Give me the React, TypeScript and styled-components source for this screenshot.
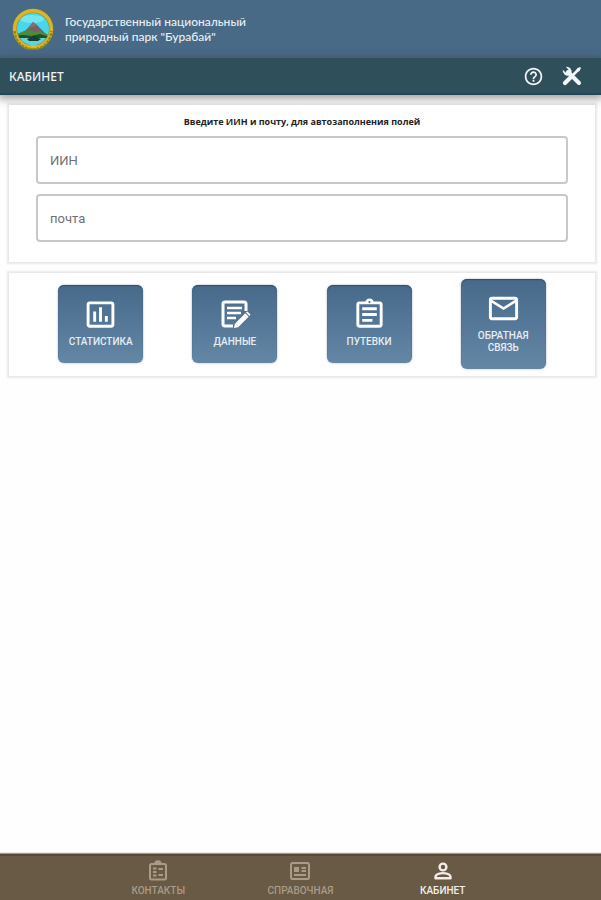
import React, { useState } from "react";
import styled, { createGlobalStyle } from "styled-components";
import {
  MdHelpOutline,
  MdInsertChartOutlined,
  MdMailOutline,
  MdOutlineAssignment,
} from "react-icons/md";

const GlobalStyle = createGlobalStyle`
  * { box-sizing: border-box; }
  body {
    margin: 0;
    background: #fefefe;
    font-family: Roboto, "Liberation Sans", sans-serif;
  }
  button { font: inherit; }
`;

const Page = styled.div`
  display: flex;
  flex-direction: column;
  min-height: 100vh;
`;

const Brand = styled.header`
  display: flex;
  align-items: center;
  gap: 11px;
  height: 58px;
  padding: 0 12px;
  background: #486a86;
  color: #e9f0f6;
`;

const BrandName = styled.h1`
  margin: 0;
  max-width: 200px;
  font: 500 12px/15px Lato, "Noto Sans", sans-serif;
`;

const TitleBar = styled.div`
  display: flex;
  align-items: center;
  justify-content: space-between;
  height: 37px;
  padding: 2px 19px 0 9px;
  background: #2f4f5b;
  border-bottom: 2px solid #214858;
  box-shadow: 0 2px 8px 2px rgba(60, 50, 50, 0.45);
  color: #eef3f5;
`;

const Title = styled.h2`
  margin: 0;
  font: 500 12px/16px "Noto Sans", "Open Sans", sans-serif;
`;

const Tools = styled.div`
  display: flex;
  gap: 18px;
`;

const IconButton = styled.button`
  display: flex;
  padding: 0;
  border: 0;
  background: none;
  color: #f3f6f8;
  cursor: pointer;
`;

const Main = styled.main`
  display: flex;
  flex: 1;
  flex-direction: column;
  gap: 11px;
  padding: 10px 6px 0 9px;
`;

const cardShadow = "0 0 2px 2px rgba(0, 0, 0, 0.09)";

const FormCard = styled.form`
  display: flex;
  flex-direction: column;
  gap: 10px;
  padding: 10px 27px 20px;
  background: #fff;
  box-shadow: ${cardShadow};
`;

const Hint = styled.p`
  margin: 0 0 -3px;
  text-align: center;
  font: 700 9px/14px "Open Sans", "Noto Sans", sans-serif;
  color: #222;
`;

const Field = styled.input`
  width: 100%;
  height: 48px;
  padding: 0 12px;
  border: 2px solid #c8c8c8;
  border-radius: 4px;
  background: #fff;
  color: #333;
  font: 400 13px/18px Roboto, sans-serif;
  &::placeholder { color: #707070; opacity: 1; }
  &:focus { outline: none; border-color: #486a86; }
`;

const ActionCard = styled.section`
  display: flex;
  align-items: center;
  justify-content: space-evenly;
  padding: 6px 0 7px;
  background: #fff;
  box-shadow: ${cardShadow};
`;

const Tile = styled.button`
  display: flex;
  flex-direction: column;
  align-items: center;
  gap: 4px;
  width: 85px;
  padding: 11px 4px 15px;
  border: 0;
  border-radius: 6px;
  background: linear-gradient(#47698a, #6487a6);
  box-shadow: inset 0 1px 1px #2d4e6b, 0 0 2px rgba(50, 80, 110, 0.5);
  color: #fff;
  cursor: pointer;
`;

const TileIcon = styled.span`
  display: flex;
  align-items: center;
  justify-content: center;
  height: 36px;
`;

const TileLabel = styled.span`
  font-size: 10px;
  line-height: 12px;
  font-weight: 500;
  color: #e6edf3;
`;

const BottomNav = styled.nav`
  display: grid;
  grid-template-columns: repeat(3, 1fr);
  height: 46px;
  padding: 0 14.5%;
  border-top: 2px solid #584a37;
  background: #695a45;
  box-shadow: 0 -1px 1px rgba(90, 85, 70, 0.6);
`;

const NavLink = styled.a<{ $active?: boolean }>`
  display: flex;
  flex-direction: column;
  align-items: center;
  gap: 2px;
  padding-top: 4px;
  color: ${(p) => (p.$active ? "#f3eee7" : "#a99b87")};
  font-size: 10px;
  line-height: 14px;
  font-weight: 500;
  text-decoration: none;
`;

function Emblem() {
  return (
    <svg width="42" height="42" viewBox="0 0 42 42" aria-hidden="true">
      <defs>
        <clipPath id="scene">
          <circle cx="21" cy="21" r="16" />
        </clipPath>
      </defs>
      <circle cx="21" cy="21" r="20.5" fill="#8d8e28" />
      <circle cx="21" cy="21" r="18.3" fill="none" stroke="#dcb42c" strokeWidth="3.4" />
      <path d="M2.7 23A18.3 18.3 0 0 0 39.3 23" fill="none" stroke="#8a8b22" strokeWidth="2.4" strokeDasharray="3 1" />
      <g clipPath="url(#scene)">
        <path fill="#45d8ec" d="M4 4h34v34H4z" />
        <ellipse cx="20" cy="11" rx="12" ry="4" fill="#72e5ef" />
        <path fill="#796064" d="M8 27 16 20l5-6 4 3 10 10z" />
        <path fill="#8f6a6e" d="m16 20 5-6 4 3-4 2z" />
        <path fill="#4d8a39" d="M4 27c6-4 9-4 14-5l5 2 5-1c4 2 7 3 10 5v4H4z" />
        <path fill="#244d2c" d="M5 28c8-2 10 0 15 0l8-2 10 3v3H5z" />
        <path fill="#62d4dc" d="M4 30h34v9H4z" />
        <path fill="#153e35" d="m15 31 5-2 2-2 2 2 5 2-3 2h-9z" />
      </g>
      <path d="M19 37h5v3h-5z" fill="#d5bd32" />
    </svg>
  );
}

function ToolsIcon() {
  return (
    <svg width="20" height="20" viewBox="0 0 20 20" fill="none" aria-hidden="true">
      <path d="m3 17 5-5" stroke="currentColor" strokeWidth="4.2" strokeLinecap="round" />
      <path d="m7 13 10-10" stroke="currentColor" strokeWidth="2.6" />
      <path d="m15 2.5 3-1.5 1 1-1.5 3-2 .7-1.2-1.2z" fill="currentColor" />
      <path d="m6 6 11 11" stroke="currentColor" strokeWidth="4" strokeLinecap="round" />
      <path d="M3.8.8a5 5 0 0 1 5.5 6.7L7.5 9.3A5 5 0 0 1 .8 3.8l2.8 2.7 2.5-.5.4-2.3z" fill="currentColor" />
    </svg>
  );
}

function FormEditIcon() {
  return (
    <svg width="32" height="32" viewBox="0 0 32 32" fill="none" stroke="currentColor" aria-hidden="true">
      <path d="M14 28H6a2 2 0 0 1-2-2V6a2 2 0 0 1 2-2h19a2 2 0 0 1 2 2v7" strokeWidth="3" />
      <path d="M8 10h15M8 15h14M8 20h9" strokeWidth="2.6" />
      <path d="m18 27 10-10" strokeWidth="4.6" />
      <path d="m16 25 4 4-5 1zM27 14.5l1.5-1 3 3-1 1.5z" fill="currentColor" stroke="none" />
    </svg>
  );
}

function ContactsIcon() {
  return (
    <svg width="22" height="22" viewBox="0 0 22 22" fill="none" stroke="currentColor" aria-hidden="true">
      <rect x="3" y="4" width="16" height="15.5" rx="1.5" strokeWidth="2" />
      <path d="M8 4a3 3 0 0 1 6 0" fill="currentColor" strokeWidth="1.4" />
      <path d="M6 8.5h3.5M6 12h3.5M6 15.5h3.5M11.5 9H16M11.5 15H16" strokeWidth="1.8" />
    </svg>
  );
}

function ReferenceIcon() {
  return (
    <svg width="22" height="22" viewBox="0 0 22 22" fill="none" stroke="currentColor" aria-hidden="true">
      <rect x="2" y="3" width="18" height="16" rx="1.8" strokeWidth="2" />
      <path d="M5 7h5v5H5z" fill="currentColor" stroke="none" />
      <path d="M12.5 8H17M12.5 11H17M5 15h12" strokeWidth="1.8" />
    </svg>
  );
}

function PersonIcon() {
  return (
    <svg width="22" height="22" viewBox="0 0 22 22" fill="none" stroke="currentColor" strokeWidth="2.4" aria-hidden="true">
      <circle cx="11" cy="7" r="3.4" />
      <path d="M3.5 18.2v-1.4c0-2.5 4.5-3.7 7.5-3.7s7.5 1.2 7.5 3.7v1.4z" strokeLinejoin="round" />
    </svg>
  );
}

const actions = [
  { label: "СТАТИСТИКА", icon: <MdInsertChartOutlined size={35} /> },
  { label: "ДАННЫЕ", icon: <FormEditIcon /> },
  { label: "ПУТЕВКИ", icon: <MdOutlineAssignment size={35} /> },
  { label: "ОБРАТНАЯ СВЯЗЬ", icon: <MdMailOutline size={35} /> },
];

export default function App() {
  const [iin, setIin] = useState("");
  const [mail, setMail] = useState("");

  return (
    <>
      <GlobalStyle />
      <Page>
        <Brand>
          <Emblem />
          <BrandName>Государственный национальный природный парк "Бурабай"</BrandName>
        </Brand>
        <TitleBar>
          <Title>КАБИНЕТ</Title>
          <Tools>
            <IconButton type="button" aria-label="Помощь"><MdHelpOutline size={21} /></IconButton>
            <IconButton type="button" aria-label="Настройки"><ToolsIcon /></IconButton>
          </Tools>
        </TitleBar>
        <Main>
          <FormCard>
            <Hint>Введите ИИН и почту, для автозаполнения полей</Hint>
            <Field aria-label="ИИН" placeholder="ИИН" value={iin} onChange={(e) => setIin(e.target.value)} />
            <Field aria-label="почта" type="email" placeholder="почта" value={mail} onChange={(e) => setMail(e.target.value)} />
          </FormCard>
          <ActionCard>
            {actions.map((a) => (
              <Tile key={a.label} type="button">
                <TileIcon>{a.icon}</TileIcon>
                <TileLabel>{a.label}</TileLabel>
              </Tile>
            ))}
          </ActionCard>
        </Main>
        <BottomNav>
          <NavLink href="#contacts"><ContactsIcon />КОНТАКТЫ</NavLink>
          <NavLink href="#reference"><ReferenceIcon />СПРАВОЧНАЯ</NavLink>
          <NavLink href="#cabinet" $active aria-current="page"><PersonIcon />КАБИНЕТ</NavLink>
        </BottomNav>
      </Page>
    </>
  );
}
